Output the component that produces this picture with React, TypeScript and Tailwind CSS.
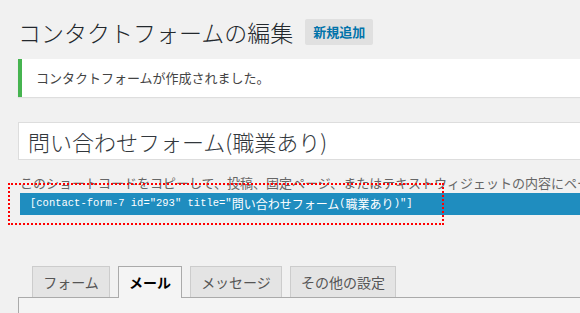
import React from "react";

const jp = { fontFamily: '"Noto Sans CJK JP", "Noto Sans", sans-serif' };
const mono = { fontFamily: '"Liberation Mono", monospace' };

export default function App() {
  const tabs = [
    { label: "フォーム", w: "w-[78px]", active: false },
    { label: "メール", w: "w-[64px]", active: true },
    { label: "メッセージ", w: "w-[92px]", active: false },
    { label: "その他の設定", w: "w-[106px]", active: false },
  ];
  return (
    <div className="relative w-[580px] h-[313px] overflow-hidden bg-[#f1f1f1]" style={jp}>
      <div className="pl-[18px] pt-[19px]">
        <div className="flex items-center h-[26px]">
          <h1 className="text-[23px] leading-[26px] text-[#23282d] font-light">コンタクトフォームの編集</h1>
          <span className="ml-[12px] h-[26px] px-[8px] rounded-[2px] bg-[#e0e0e0] text-[#0073aa] text-[13px] font-semibold flex items-center">
            新規追加
          </span>
        </div>
        <div className="mt-[14px] h-[38px] bg-white border-l-4 border-[#46b450] shadow-[0_1px_1px_rgba(0,0,0,0.08)] flex items-center pl-[14px]">
          <span className="text-[13px] text-[#444]">コンタクトフォームが作成されました。</span>
        </div>
        <div className="mt-[25px] h-[38px] bg-white border border-[#ddd] border-r-0 flex items-center pl-[9px]">
          <span className="text-[22px] text-[#32373c] leading-none font-light">問い合わせフォーム(職業あり)</span>
        </div>
        <div className="mt-[14px] h-[18px] flex items-center pl-[2px] whitespace-nowrap overflow-hidden">
          <span className="text-[13px] text-[#666]">このショートコードをコピーして、投稿、固定ページ、またはテキストウィジェットの内容にペーストしてください。</span>
        </div>
        <div className="ml-[2px] mt-[1px] h-[22px] bg-[#1f8dbf] flex items-center pl-[10px] whitespace-nowrap text-white">
          <span className="text-[10.5px]" style={mono}>[contact-form-7 id="293" title="</span>
          <span className="text-[12px]" style={jp}>問い合わせフォーム</span>
          <span className="text-[10.5px]" style={mono}>(</span>
          <span className="text-[12px]" style={jp}>職業あり</span>
          <span className="text-[10.5px]" style={mono}>)"]</span>
        </div>
        <div className="mt-[51px] flex items-end gap-[8px] pl-[14px] relative z-10">
          {tabs.map((t) =>
            t.active ? (
              <div
                key={t.label}
                className={`${t.w} h-[32px] -mb-px bg-[#f4f4f4] border border-[#aaa] border-b-0 flex items-center justify-center text-[14px] font-bold text-black`}
              >
                {t.label}
              </div>
            ) : (
              <div
                key={t.label}
                className={`${t.w} h-[31px] bg-[#e4e4e4] border border-[#ccc] border-b-0 flex items-center justify-center text-[14px] text-[#555]`}
              >
                {t.label}
              </div>
            )
          )}
        </div>
        <div className="h-[40px] bg-[#f4f4f4] border-t border-l border-[#aaa]" />
      </div>
      <div className="absolute left-[8px] top-[183px] w-[436px] h-[42px] border-2 border-dotted border-[#ff0000]" />
    </div>
  );
}
